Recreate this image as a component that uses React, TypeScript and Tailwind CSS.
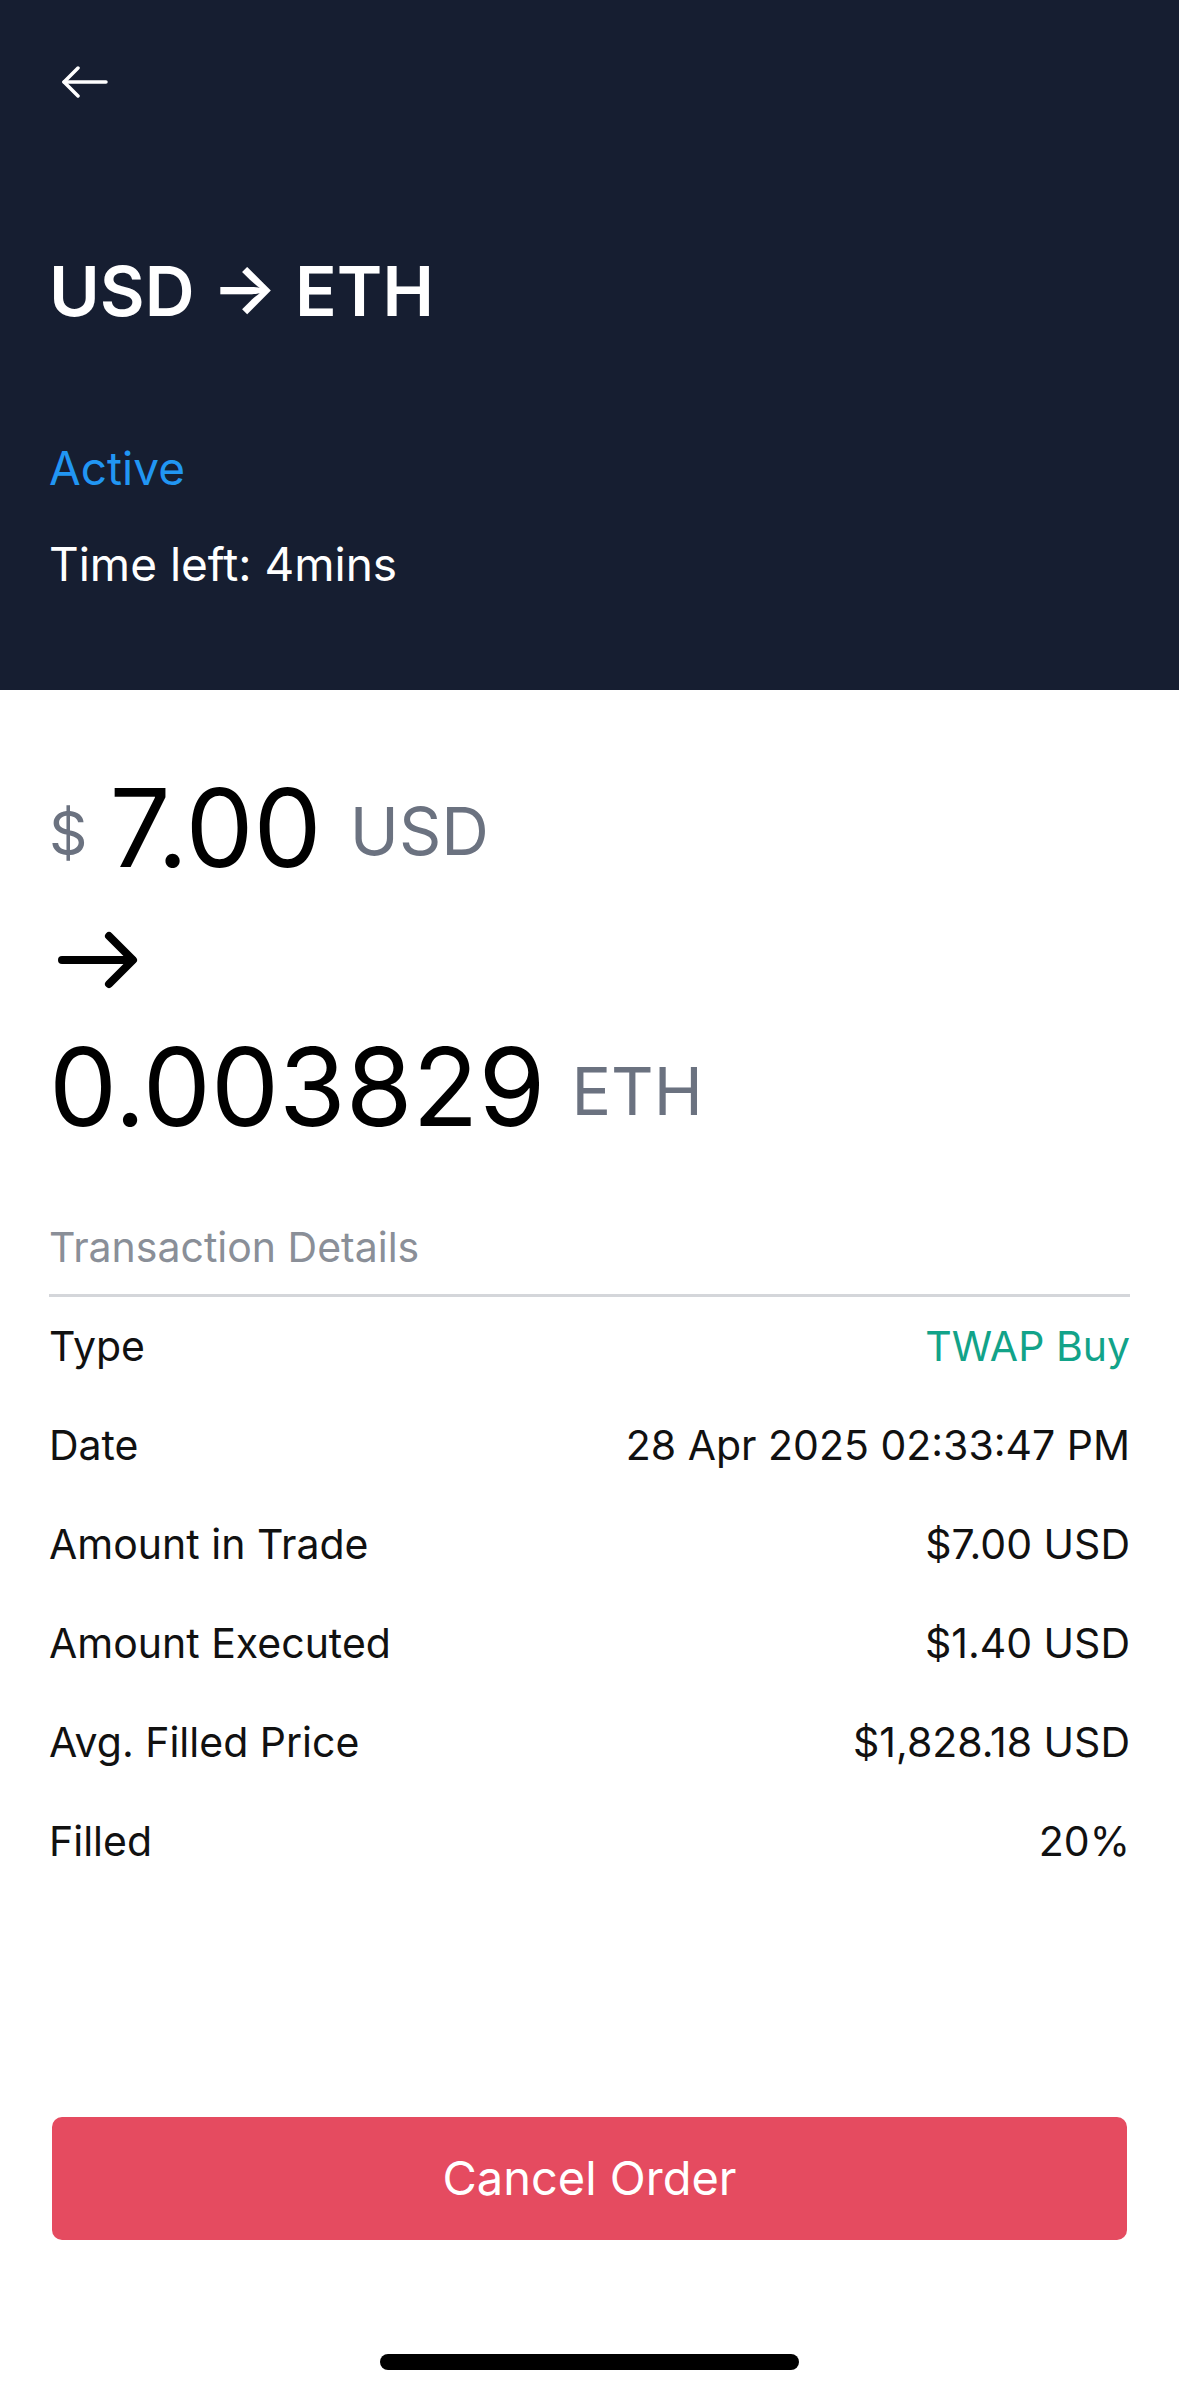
import React from 'react';

const rows: { label: string; value: string; accent?: boolean }[] = [
  { label: 'Type', value: 'TWAP Buy', accent: true },
  { label: 'Date', value: '28 Apr 2025 02:33:47 PM' },
  { label: 'Amount in Trade', value: '$7.00 USD' },
  { label: 'Amount Executed', value: '$1.40 USD' },
  { label: 'Avg. Filled Price', value: '$1,828.18 USD' },
  { label: 'Filled', value: '20%' },
];

export default function App() {
  return (
    <div className="w-[1179px] h-[2396px] bg-white flex flex-col font-['Inter',sans-serif] overflow-hidden">
      {/* header */}
      <div className="h-[690px] bg-[#161e31] px-[49px] pt-[66px] flex flex-col text-white">
        <svg width="48" height="32" viewBox="0 0 48 32" fill="none" stroke="white" strokeWidth="3.5" strokeLinecap="round" strokeLinejoin="round" className="ml-[12px]">
          <path d="M45 16H3" />
          <path d="M17 2L3 16L17 30" />
        </svg>
        <h1 className="mt-[152px] text-[69px] leading-[82px] font-semibold">USD → ETH</h1>
        <p className="mt-[108px] text-[46px] leading-[56px] text-[#2196f3]">Active</p>
        <p className="mt-[40px] text-[46px] leading-[56px]">Time left: 4mins</p>
      </div>

      {/* amounts */}
      <div className="px-[49px] pt-[84px] flex flex-col">
        <div className="flex items-baseline leading-none">
          <span className="text-[60px] text-[#6b7280] -translate-y-[12px]">$</span>
          <span className="ml-[22px] text-[108px] text-black">7.00</span>
          <span className="ml-[28px] text-[66px] text-[#6b7280] -translate-y-[12px]">USD</span>
        </div>
        <svg width="82" height="58" viewBox="0 0 82 58" fill="none" stroke="black" strokeWidth="8" strokeLinecap="round" strokeLinejoin="round" className="mt-[49px] ml-[8px]">
          <path d="M5 29H75" />
          <path d="M52 5L76 29L52 53" />
        </svg>
        <div className="mt-[44px] flex items-baseline leading-none">
          <span className="text-[108px] text-black">0.003829</span>
          <span className="ml-[26px] text-[66px] text-[#6b7280] -translate-y-[11px]">ETH</span>
        </div>

        {/* details */}
        <p className="mt-[82px] text-[41px] leading-[48px] text-[#8a8f98]">Transaction Details</p>
        <div className="mt-[23px] h-[3px] bg-[#d4d6da]" />
        <div className="flex flex-col">
          {rows.map((r) => (
            <div key={r.label} className="flex justify-between text-[41px] leading-[99px] text-[#111111]">
              <span>{r.label}</span>
              <span className={r.accent ? 'text-[#12a389]' : ''}>{r.value}</span>
            </div>
          ))}
        </div>
      </div>

      <button className="mt-[226px] mx-[52px] h-[123px] rounded-[10px] bg-[#e54b60] text-white text-[47px]">
        Cancel Order
      </button>

      <div className="mt-[114px] self-center w-[419px] h-[16px] rounded-full bg-black" />
    </div>
  );
}
